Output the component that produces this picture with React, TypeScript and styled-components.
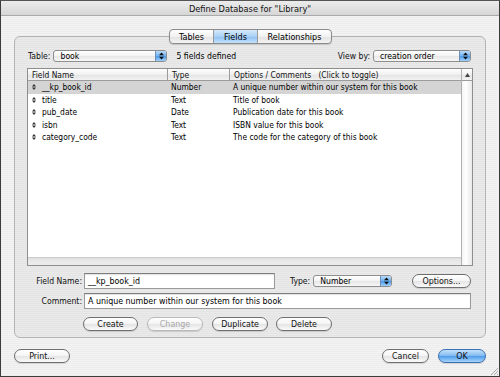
import styled, { createGlobalStyle, css } from "styled-components"

const Global = createGlobalStyle`
  html, body {
    margin: 0;
    padding: 0;
    background: #fff;
  }
  body {
    font-family: "DejaVu Sans Condensed", "DejaVu Sans", "Noto Sans", sans-serif;
    font-size: 8.4px;
    color: #000;
  }
`

const Window = styled.div`
  width: 500px;
  height: 377px;
  box-sizing: border-box;
  border: 1px solid #3c3c3c;
  border-top-color: #555;
  display: flex;
  flex-direction: column;
  background: repeating-linear-gradient(#ededed 0 1px, #f3f3f3 1px 2px);
  position: relative;
  overflow: hidden;
`

const TitleBar = styled.div`
  height: 14px;
  flex: none;
  display: flex;
  align-items: center;
  justify-content: center;
  background: linear-gradient(#ececec, #d6d6d6);
  border-bottom: 1px solid #a9a9a9;
  font-size: 9.2px;
  color: #111;
`

const Body = styled.div`
  flex: 1;
  display: flex;
  flex-direction: column;
  padding: 13px 13px 0 13px;
`

const TabRow = styled.div`
  display: flex;
  justify-content: center;
  margin-bottom: -8px;
  position: relative;
  z-index: 1;
  padding-left: 1px;
`

const Tabs = styled.div`
  display: flex;
  height: 15px;
  box-sizing: border-box;
  border: 1px solid #8a8a8a;
  border-radius: 4px;
  overflow: hidden;
  background: linear-gradient(#ffffff, #f1f1f1 50%, #e2e2e2 51%, #f4f4f4);
  box-shadow: 0 1px 1px rgba(0, 0, 0, 0.15);
`

const Tab = styled.div<{ $on?: boolean; $w: number }>`
  width: ${(p) => p.$w}px;
  display: flex;
  align-items: center;
  justify-content: center;
  font-size: 9px;
  color: #000;
  & + & {
    border-left: 1px solid #9a9a9a;
  }
  ${(p) =>
    p.$on &&
    css`
      background: linear-gradient(#d5e9fb, #a9d0f5 50%, #8dbff2 51%, #c3e2fb);
    `}
`

const Group = styled.div`
  border: 1px solid #b3b3b3;
  border-radius: 6px;
  background: rgba(0, 0, 0, 0.035);
  padding: 13px 12px 6px 12px;
  display: flex;
  flex-direction: column;
`

const TopRow = styled.div`
  display: flex;
  align-items: center;
  height: 12px;
  padding-left: 1px;
  padding-right: 2px;
`

const Label = styled.span<{ $w?: number }>`
  font-size: 8.6px;
  color: #111;
  white-space: nowrap;
  ${(p) =>
    p.$w &&
    css`
      width: ${p.$w}px;
      text-align: right;
      flex: none;
    `}
`

const Popup = styled.div<{ $w: number }>`
  width: ${(p) => p.$w}px;
  height: 12px;
  box-sizing: border-box;
  margin-left: 3px;
  border: 1px solid #8d8d8d;
  border-radius: 3px;
  background: linear-gradient(#ffffff, #f3f3f3 50%, #e6e6e6 51%, #f7f7f7);
  display: flex;
  align-items: center;
  overflow: hidden;
  font-size: 8.6px;
  padding-left: 6px;
  flex: none;
`

const PopupText = styled.span`
  flex: 1;
`

const Stepper = styled.div`
  width: 10px;
  align-self: stretch;
  background: linear-gradient(#b9dbfa, #6fb0ef 50%, #4c98e6 51%, #9fd0fb);
  border-left: 1px solid #6c8fb8;
  display: flex;
  align-items: center;
  justify-content: center;
`

const Spacer = styled.div`
  flex: 1;
`

const Count = styled.span`
  margin-left: 9px;
  font-size: 8.6px;
`

const List = styled.div`
  margin-top: 6px;
  height: 198px;
  box-sizing: border-box;
  border: 1px solid #8e8e8e;
  background: #fff;
  display: flex;
`

const Table = styled.div`
  flex: 1;
  display: flex;
  flex-direction: column;
`

const cols = "139px 62px 1fr"

const HeaderRow = styled.div`
  display: grid;
  grid-template-columns: ${cols};
  height: 12px;
  box-sizing: border-box;
  border-bottom: 1px solid #9c9c9c;
  background: linear-gradient(#ffffff, #f0f0f0 50%, #e3e3e3 51%, #f2f2f2);
`

const HeadCell = styled.div`
  padding-left: 4px;
  font-size: 8.4px;
  color: #111;
  white-space: pre;
  display: flex;
  align-items: center;
  & + & {
    border-left: 1px solid #9a9a9a;
  }
`

const Row = styled.div<{ $sel?: boolean }>`
  display: grid;
  grid-template-columns: ${cols};
  height: 12.5px;
  align-items: center;
  background: ${(p) => (p.$sel ? "#d4d4d4" : "transparent")};
`

const Cell = styled.div<{ $pad?: number }>`
  padding-left: ${(p) => p.$pad ?? 4}px;
  white-space: nowrap;
  overflow: hidden;
  display: flex;
  align-items: center;
  font-size: 8.4px;
`

const Handle = styled.span`
  width: 10px;
  display: inline-flex;
  flex: none;
`

const Rows = styled.div`
  flex: 1;
`

const ListFoot = styled.div`
  height: 8px;
  background: linear-gradient(#c4c4c4, #e6e6e6 2px, #ededed);
`

const ScrollBar = styled.div`
  width: 10px;
  flex: none;
  display: flex;
  flex-direction: column;
  border-left: 1px solid #b0b0b0;
`

const ScrollHead = styled.div`
  height: 12px;
  box-sizing: border-box;
  border-bottom: 1px solid #9c9c9c;
  background: linear-gradient(#ffffff, #f0f0f0 50%, #e3e3e3 51%, #f2f2f2);
  display: flex;
  align-items: center;
  justify-content: center;
`

const Track = styled.div`
  flex: 1;
  background: linear-gradient(90deg, #f4f4f4, #ffffff 40%, #e9e9e9);
`

const FormRow = styled.div<{ $mt: number }>`
  display: flex;
  align-items: center;
  margin-top: ${(p) => p.$mt}px;
  height: 16px;
  padding-right: 2px;
`

const TypeLabel = styled(Label)`
  margin-left: 15px;
`

const Input = styled.div<{ $w?: number }>`
  height: 16px;
  box-sizing: border-box;
  margin-left: 2px;
  ${(p) => (p.$w ? `width: ${p.$w}px; flex: none;` : "flex: 1;")}
  border: 1px solid #9a9a9a;
  border-top-color: #7c7c7c;
  background: #fff;
  box-shadow: inset 0 1px 1px rgba(0, 0, 0, 0.12);
  display: flex;
  align-items: center;
  padding-left: 3px;
  font-size: 8.8px;
`

const Button = styled.div<{ $w: number; $ml?: number; $disabled?: boolean; $default?: boolean }>`
  width: ${(p) => p.$w}px;
  height: 14px;
  margin-left: ${(p) => p.$ml ?? 0}px;
  box-sizing: border-box;
  flex: none;
  border: 1px solid ${(p) => (p.$disabled ? "#b9b9b9" : "#6e6e6e")};
  border-radius: 8px;
  background: linear-gradient(#ffffff, #f4f4f4 50%, #e4e4e4 51%, #fafafa);
  display: flex;
  align-items: center;
  justify-content: center;
  font-size: 8.8px;
  color: ${(p) => (p.$disabled ? "#a8a8a8" : "#111")};
  box-shadow: 0 1px 1px rgba(0, 0, 0, 0.12);
  ${(p) =>
    p.$default &&
    css`
      border-color: #3d6fb3;
      background: linear-gradient(#c4e1fb, #7eb9f1 50%, #4d9ae8 51%, #a8d6fd);
    `}
`

const ButtonRow = styled.div`
  display: flex;
  align-items: center;
  margin-top: 8px;
  padding-left: 56px;
`

const Footer = styled.div`
  display: flex;
  align-items: center;
  margin-top: 11px;
  margin-left: -13px;
  margin-right: -13px;
  padding: 0 13px;
`

const Grip = styled.svg`
  position: absolute;
  right: 1px;
  bottom: 1px;
`

const Arrows = ({ color = "#111" }: { color?: string }) => (
  <svg width="5" height="8" viewBox="0 0 5 8">
    <polygon points="0,3.2 2.5,0.5 5,3.2" fill={color} />
    <polygon points="0,4.8 2.5,7.5 5,4.8" fill={color} />
  </svg>
)

const SortHandle = () => (
  <svg width="4" height="6" viewBox="0 0 4 6">
    <polygon points="0,2.6 2,0 4,2.6" fill="#333" />
    <polygon points="0,3.4 2,6 4,3.4" fill="#333" />
  </svg>
)

const fields = [
  { name: "__kp_book_id", type: "Number", note: "A unique number within our system for this book" },
  { name: "title", type: "Text", note: "Title of book" },
  { name: "pub_date", type: "Date", note: "Publication date for this book" },
  { name: "isbn", type: "Text", note: "ISBN value for this book" },
  { name: "category_code", type: "Text", note: "The code for the category of this book" },
]

export default function App() {
  return (
    <Window>
      <Global />
      <TitleBar>Define Database for "Library"</TitleBar>
      <Body>
        <TabRow>
          <Tabs>
            <Tab $w={43}>Tables</Tab>
            <Tab $w={43} $on>
              Fields
            </Tab>
            <Tab $w={73}>Relationships</Tab>
          </Tabs>
        </TabRow>
        <Group>
          <TopRow>
            <Label>Table:</Label>
            <Popup $w={114}>
              <PopupText>book</PopupText>
              <Stepper>
                <Arrows />
              </Stepper>
            </Popup>
            <Count>5 fields defined</Count>
            <Spacer />
            <Label>View by:</Label>
            <Popup $w={98}>
              <PopupText>creation order</PopupText>
              <Stepper>
                <Arrows />
              </Stepper>
            </Popup>
          </TopRow>
          <List>
            <Table>
              <HeaderRow>
                <HeadCell>Field Name</HeadCell>
                <HeadCell>Type</HeadCell>
                <HeadCell>{"Options / Comments   (Click to toggle)"}</HeadCell>
              </HeaderRow>
              <Rows>
                {fields.map((f, i) => (
                  <Row key={f.name} $sel={i === 0}>
                    <Cell $pad={4}>
                      <Handle>
                        <SortHandle />
                      </Handle>
                      {f.name}
                    </Cell>
                    <Cell>{f.type}</Cell>
                    <Cell>{f.note}</Cell>
                  </Row>
                ))}
              </Rows>
              <ListFoot />
            </Table>
            <ScrollBar>
              <ScrollHead>
                <svg width="5" height="4" viewBox="0 0 5 4">
                  <polygon points="0,4 2.5,0 5,4" fill="#444" />
                </svg>
              </ScrollHead>
              <Track />
            </ScrollBar>
          </List>
          <FormRow $mt={7}>
            <Label $w={55}>Field Name:</Label>
            <Input $w={191}>__kp_book_id</Input>
            <TypeLabel>Type:</TypeLabel>
            <Popup $w={79}>
              <PopupText>Number</PopupText>
              <Stepper>
                <Arrows />
              </Stepper>
            </Popup>
            <Spacer />
            <Button $w={59}>Options...</Button>
          </FormRow>
          <FormRow $mt={4}>
            <Label $w={55}>Comment:</Label>
            <Input>A unique number within our system for this book</Input>
          </FormRow>
          <ButtonRow>
            <Button $w={55}>Create</Button>
            <Button $w={56} $ml={9} $disabled>
              Change
            </Button>
            <Button $w={56} $ml={9}>
              Duplicate
            </Button>
            <Button $w={56} $ml={8}>
              Delete
            </Button>
          </ButtonRow>
        </Group>
        <Footer>
          <Button $w={56}>Print...</Button>
          <Spacer />
          <Button $w={47}>Cancel</Button>
          <Button $w={48} $ml={9} $default>
            OK
          </Button>
        </Footer>
      </Body>
      <Grip width="9" height="9" viewBox="0 0 9 9">
        <line x1="2" y1="9" x2="9" y2="2" stroke="#999" strokeWidth="0.8" />
        <line x1="5" y1="9" x2="9" y2="5" stroke="#999" strokeWidth="0.8" />
        <line x1="8" y1="9" x2="9" y2="8" stroke="#999" strokeWidth="0.8" />
      </Grip>
    </Window>
  )
}
